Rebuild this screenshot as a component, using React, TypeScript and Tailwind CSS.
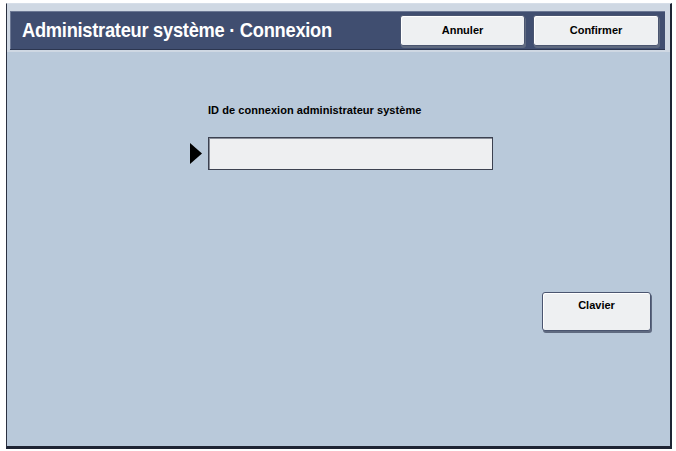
const btn =
  'flex items-center justify-center rounded-[3px] border border-[#4a5570] bg-[#eef0f2] text-[11px] font-bold text-black shadow-[1px_2px_0_#5f6a80,inset_1px_1px_0_#ffffff]'

export default function App() {
  return (
    <div
      className="w-[676px] h-[451px] bg-white pt-[3px] pl-[6px]"
      style={{ fontFamily: '"Liberation Sans", Arial, sans-serif' }}
    >
      <div className="w-[666px] h-[446px] flex flex-col bg-[#b9c9da] border-l border-l-[#2a3040] border-r-2 border-r-[#1e2433] border-b-[3px] border-b-[#1e2433] border-t border-t-[#d6dee8]">
        {/* Title bar */}
        <div className="flex items-stretch h-[48px] bg-[#cfd8e3] pt-[7px] pl-[3px] pr-[5px] pb-[2px]">
          <div className="flex flex-1 items-center gap-[8px] bg-[#404e70] border-b border-b-[#2c3650] pl-[12px] pr-[6px] shadow-[inset_1px_1px_0_#6c7894]">
            <h1
              className="flex-1 text-white font-bold text-[21px] tracking-[-0.3px] origin-left scale-x-[0.87] whitespace-nowrap"
              style={{ fontFamily: '"Liberation Sans Narrow", "Liberation Sans", Arial, sans-serif' }}
            >
              Administrateur système · Connexion
            </h1>
            <button className={`${btn} w-[125px] h-[31px]`}>Annuler</button>
            <button className={`${btn} w-[126px] h-[31px]`}>Confirmer</button>
          </div>
        </div>

        {/* Body */}
        <div className="relative flex-1">
          <div className="absolute left-[201px] top-[50px] text-[11px] font-bold text-black tracking-[0.05px]">
            ID de connexion administrateur système
          </div>
          <div className="absolute left-[183px] top-[85px] flex items-center gap-[6px]">
            <svg width="12" height="21" viewBox="0 0 12 21">
              <path d="M0 0 L12 10.5 L0 21 Z" fill="#000" />
            </svg>
            <div className="w-[285px] h-[33px] bg-[#eeeff1] border border-[#3c4150] shadow-[inset_1px_1px_0_#8a8f9a]" />
          </div>
          <button className={`${btn} absolute left-[535px] top-[240px] w-[109px] h-[39px] items-start pt-[4px]`}>
            Clavier
          </button>
        </div>
      </div>
    </div>
  )
}
